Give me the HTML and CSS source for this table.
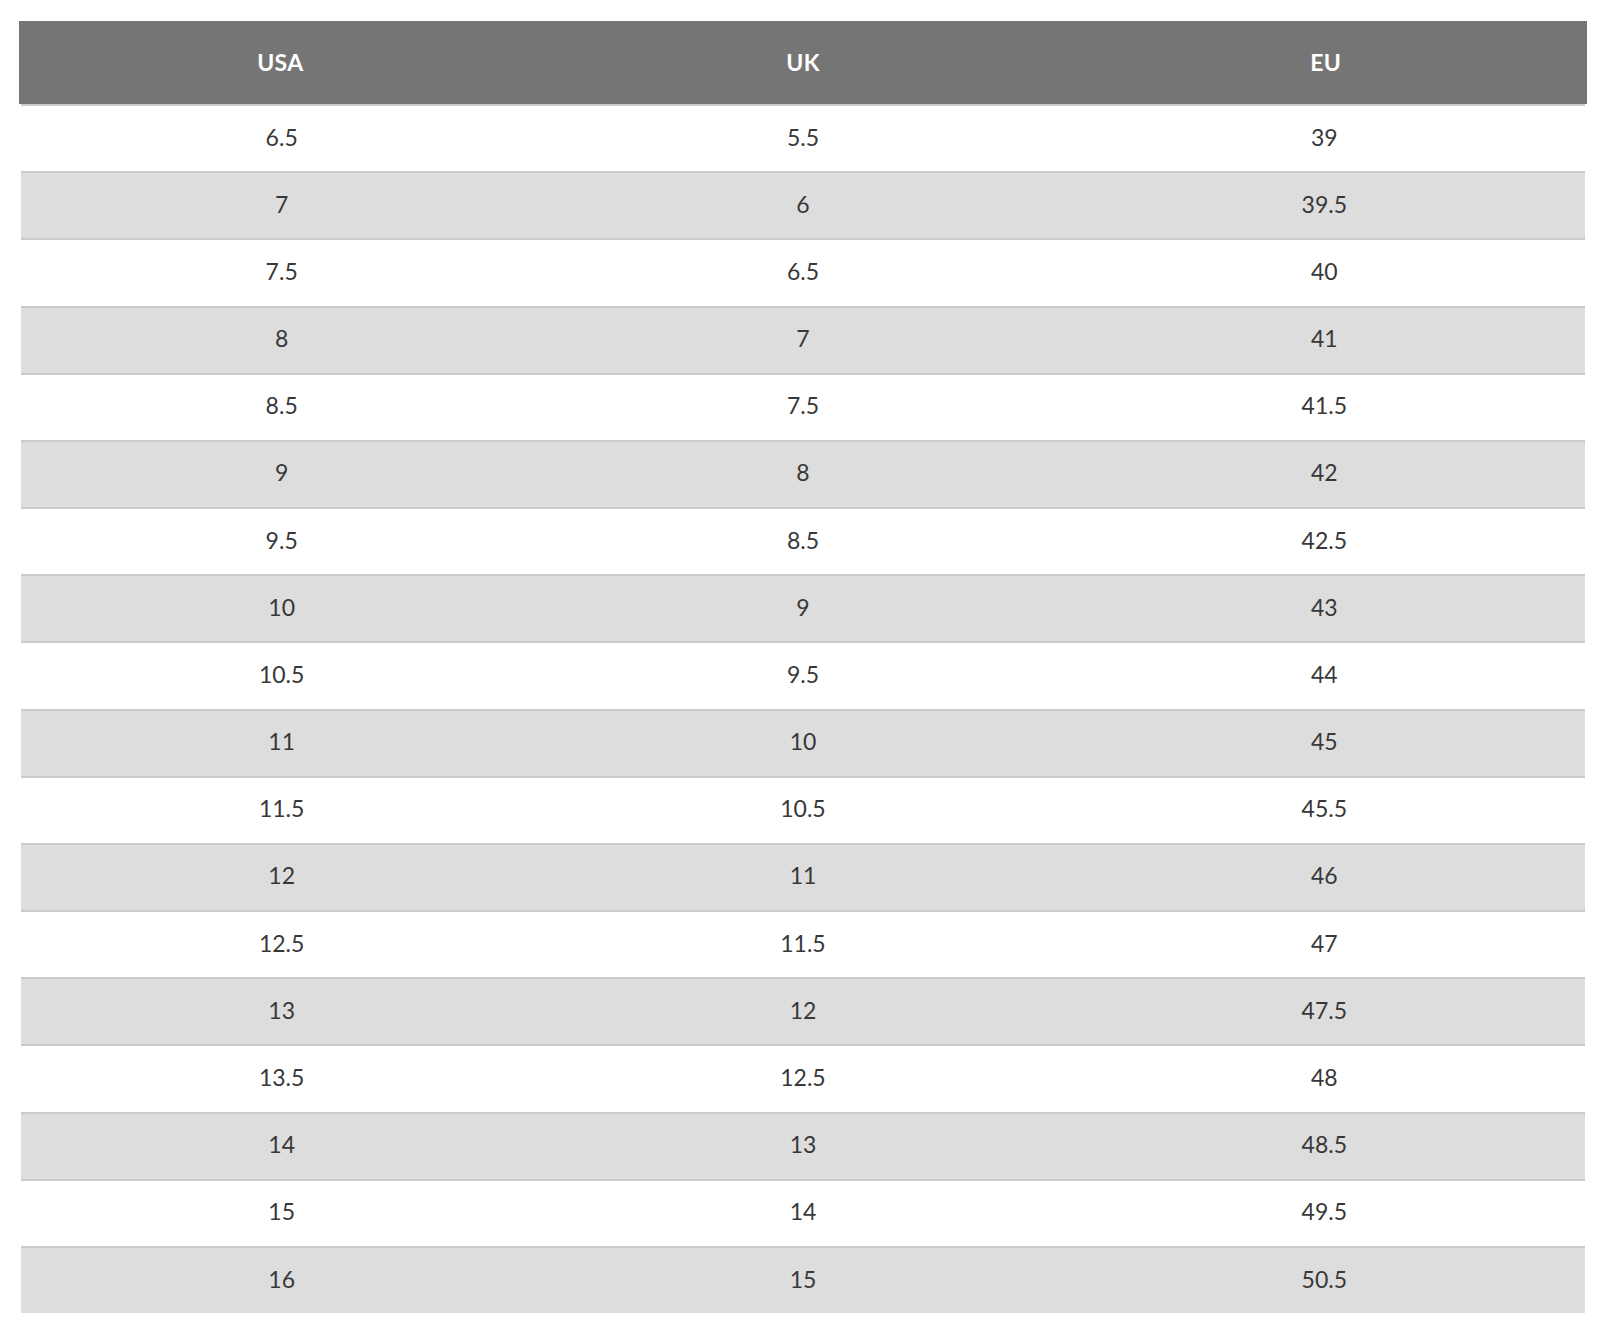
FILE: index.html
```html
<!DOCTYPE html>
<html lang="en">
<head>
<meta charset="utf-8">
<title>Size chart</title>
<link rel="stylesheet" href="styles.css">
</head>
<body>
<div class="chart">
  <div class="head">
    <div>USA</div><div>UK</div><div>EU</div>
  </div>
  <div class="row"><div>6.5</div><div>5.5</div><div>39</div></div>
  <div class="row"><div>7</div><div>6</div><div>39.5</div></div>
  <div class="row"><div>7.5</div><div>6.5</div><div>40</div></div>
  <div class="row"><div>8</div><div>7</div><div>41</div></div>
  <div class="row"><div>8.5</div><div>7.5</div><div>41.5</div></div>
  <div class="row"><div>9</div><div>8</div><div>42</div></div>
  <div class="row"><div>9.5</div><div>8.5</div><div>42.5</div></div>
  <div class="row"><div>10</div><div>9</div><div>43</div></div>
  <div class="row"><div>10.5</div><div>9.5</div><div>44</div></div>
  <div class="row"><div>11</div><div>10</div><div>45</div></div>
  <div class="row"><div>11.5</div><div>10.5</div><div>45.5</div></div>
  <div class="row"><div>12</div><div>11</div><div>46</div></div>
  <div class="row"><div>12.5</div><div>11.5</div><div>47</div></div>
  <div class="row"><div>13</div><div>12</div><div>47.5</div></div>
  <div class="row"><div>13.5</div><div>12.5</div><div>48</div></div>
  <div class="row"><div>14</div><div>13</div><div>48.5</div></div>
  <div class="row"><div>15</div><div>14</div><div>49.5</div></div>
  <div class="row"><div>16</div><div>15</div><div>50.5</div></div>
</div>
</body>
</html>
```
FILE: styles.css
```css
html, body {
  margin: 0;
  padding: 0;
  background: #ffffff;
}

.chart {
  width: 1568px;
  margin: 21px 0 0 19px;
  font-family: Lato, "Liberation Sans", sans-serif;
  font-size: 23px;
}

.head {
  display: grid;
  grid-template-columns: 1fr 1fr 1fr;
  align-items: center;
  justify-items: center;
  box-sizing: border-box;
  height: 83px;
  padding-bottom: 2px;
  background: #757575;
  color: #ffffff;
  font-weight: 700;
  letter-spacing: 0.3px;
}

.row {
  display: grid;
  grid-template-columns: 1fr 1fr 1fr;
  align-items: center;
  justify-items: center;
  box-sizing: border-box;
  height: 67.18px;
  margin: 0 2px;
  padding-bottom: 4px;
  border-top: 2px solid #cacaca;
  color: #383838;
  background: #ffffff;
}

.row:first-of-type {
  height: 66px;
  border-top: none;
}

.row:nth-child(odd) {
  background: #dddddd;
}
```
